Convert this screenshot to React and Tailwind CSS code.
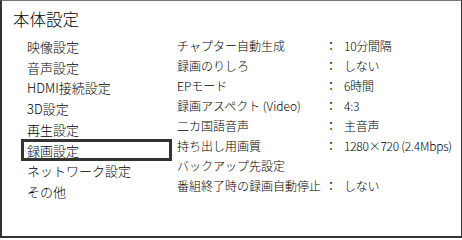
const menu = [
  "映像設定",
  "音声設定",
  "HDMI接続設定",
  "3D設定",
  "再生設定",
  "録画設定",
  "ネットワーク設定",
  "その他",
];

const settings = [
  ["チャプター自動生成", "10分間隔"],
  ["録画のりしろ", "しない"],
  ["EPモード", "6時間"],
  ["録画アスペクト (Video)", "4:3"],
  ["二カ国語音声", "主音声"],
  ["持ち出し用画質", "1280×720 (2.4Mbps)"],
  ["バックアップ先設定", null],
  ["番組終了時の録画自動停止", "しない"],
];

const font = { fontFamily: '"Noto Sans CJK JP", "Noto Sans", sans-serif' };

export default function App() {
  return (
    <div
      className="w-[462px] h-[238px] bg-white text-black font-light border-t border-r border-l-2 border-b-2 border-t-[#777] border-r-[#333] border-l-[#333] border-b-[#333] overflow-hidden"
      style={font}
    >
      <div className="pl-[11px] pt-[6px] text-[16.5px] leading-[24px]">本体設定</div>
      <div className="flex mt-[5px]">
        {/* left menu */}
        <div className="w-[151px] ml-[19px] flex flex-col">
          {menu.map((m) => (
            <div
              key={m}
              className={
                "flex items-center pl-[3px] text-[13px] leading-none border-[3px] " +
                (m === "録画設定" ? "border-[#333] h-[22px] -my-[0.6px]" : "border-transparent h-[20.75px]")
              }
            >
              {m}
            </div>
          ))}
        </div>
        {/* right list */}
        <div className="ml-[5px] flex flex-col text-[12px]">
          {settings.map(([label, value]) => (
            <div key={label} className="flex h-[20px] items-center">
              <span className="w-[148px]">{label}</span>
              {value && (
                <>
                  <span className="w-[19px] font-normal">：</span>
                  <span className="tracking-[-0.25px]">{value}</span>
                </>
              )}
            </div>
          ))}
        </div>
      </div>
    </div>
  );
}
